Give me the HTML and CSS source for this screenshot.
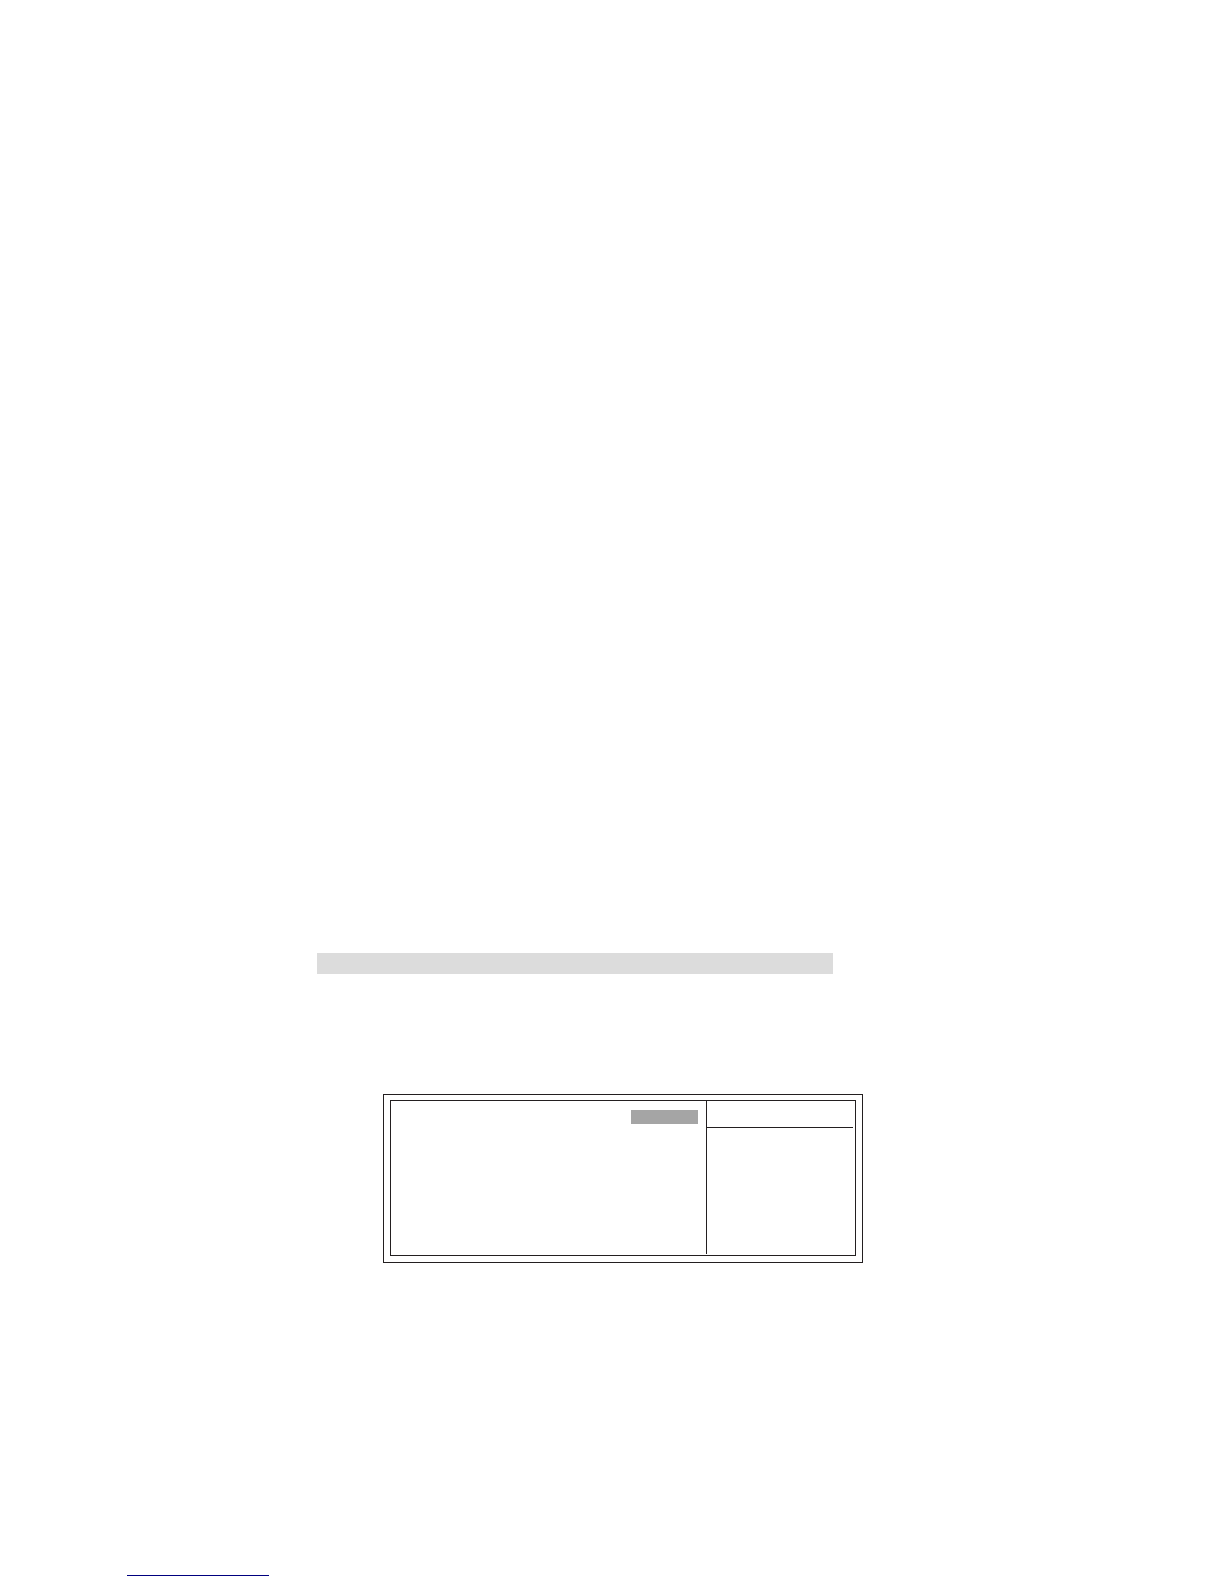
FILE: index.html
```html
<!DOCTYPE html>
<html lang="en">
<head>
<meta charset="utf-8">
<meta name="viewport" content="width=device-width, initial-scale=1">
<title>Setup page</title>
<link rel="stylesheet" href="styles.css">
</head>
<body>
<main class="page">
  <div class="heading-band"></div>
  <section class="frame">
    <div class="panel">
      <div class="options"><div class="selected"></div></div>
      <aside class="help"><div class="help-title"></div></aside>
    </div>
  </section>
  <footer class="footer"><hr class="rule"></footer>
</main>
</body>
</html>
```
FILE: styles.css
```css
* {
  box-sizing: border-box;
}

body {
  margin: 0;
  background: #fff;
  font-family: "Liberation Sans", Arial, sans-serif;
}

.page {
  display: flex;
  flex-direction: column;
  min-height: 100vh;
  padding: 953px 127px 8px;
}

.heading-band {
  width: 100%;
  max-width: 516px;
  height: 21px;
  margin-left: 190px;
  background: #dcdcdc;
}

.frame {
  width: 100%;
  max-width: 480px;
  margin: 120px 0 0 256px;
  padding: 5px 6px 6px;
  border: 1px solid #231f20;
}

.panel {
  display: flex;
  min-height: 156px;
  border: 1px solid #231f20;
}

.options {
  flex: 1;
  padding: 9px 8px;
}

.selected {
  width: 67px;
  height: 14px;
  margin-left: auto;
  background: #a5a5a5;
}

.help {
  width: 147px;
  margin: 0 2px 1px 0;
  border-left: 1px solid #231f20;
}

.help-title {
  height: 27px;
  border-bottom: 1px solid #231f20;
}

.footer {
  margin-top: auto;
}

.rule {
  width: 142px;
  height: 1px;
  margin: 0;
  border: 0;
  background: #00007f;
}
```
